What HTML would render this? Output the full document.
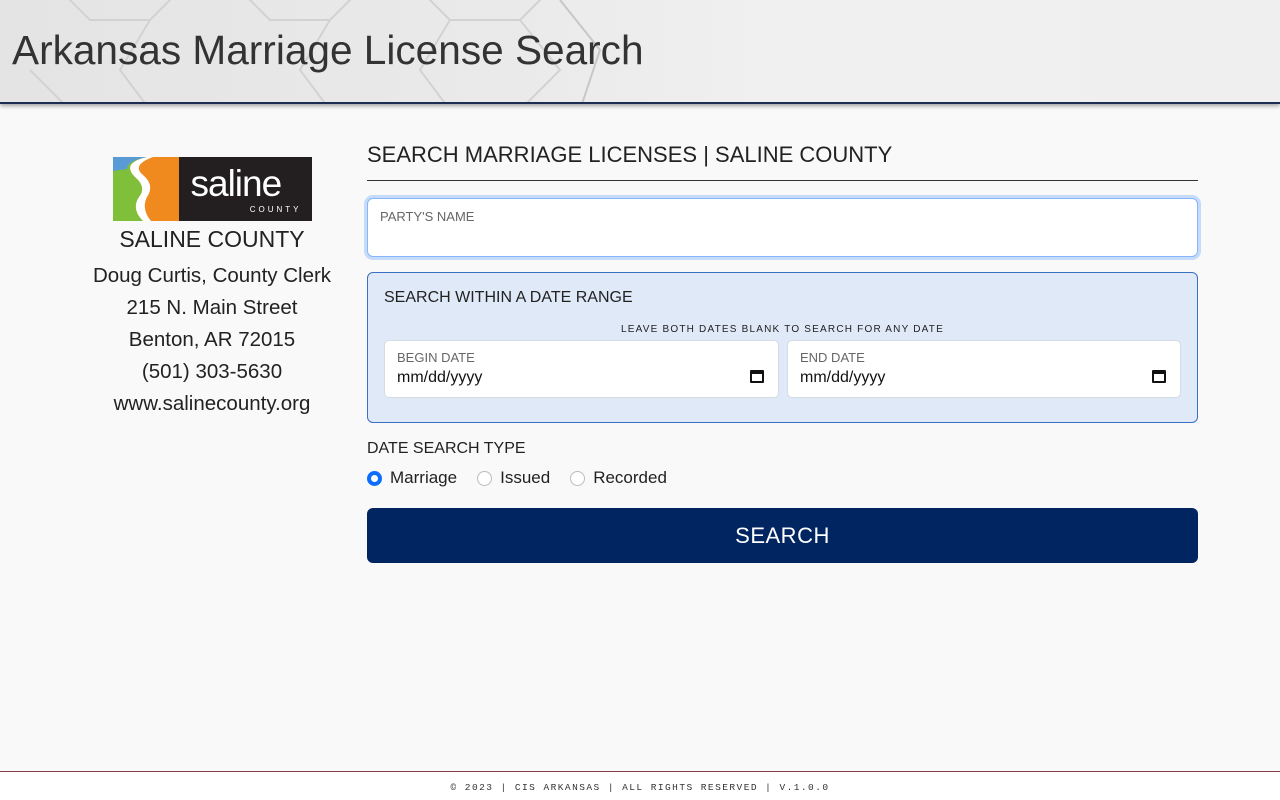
<!DOCTYPE html>
<html><head><meta charset="utf-8"><style>
*{box-sizing:border-box;margin:0;padding:0}
body{width:1280px;height:800px;background:#f9f9f9;font-family:"Liberation Sans",sans-serif;color:#222;position:relative;overflow:hidden}
.hdr{position:absolute;left:0;top:0;width:1280px;height:104px;background:linear-gradient(90deg,#e4e4e4 0%,#eaeaea 40%,#f0f0f0 60%,#efefef 100%);border-bottom:2px solid #1d2c52;box-shadow:0 2px 4px rgba(0,0,0,.35);overflow:hidden}
.hdr h1{position:absolute;left:12px;top:27px;font-weight:normal;font-size:40.6px;color:#333}
.left{position:absolute;left:82px;width:260px;top:157px;text-align:center}
.logo{width:199px;height:64px;margin:0 auto;display:flex}
.logo .l{width:66px;height:64px;position:relative;overflow:hidden}
.logo .r{flex:1;background:#231f20;color:#fff;position:relative}
.left .cn{font-size:23px;margin-top:5px;color:#222}
.left p{font-size:20.5px;line-height:32px;color:#222}
.main{position:absolute;left:367px;width:831px;top:142px}
.main h2{font-weight:normal;font-size:22px;color:#222;padding-bottom:12px;border-bottom:1px solid #333}
.pn{margin-top:17px;height:59px;background:#fff;border:1px solid #86b7fe;box-shadow:0 0 0 3px #c6dbfa;border-radius:6px;padding:10px 12px;font-size:13px;color:#666}
.dr{margin-top:15px;height:151px;background:#dfe9f8;border:1px solid #3a6fc4;border-radius:6px;position:relative}
.dr .t{position:absolute;left:16px;top:16px;font-size:16px;color:#222}
.dr .hint{position:absolute;left:0;right:0;top:51px;text-align:center;font-size:10px;letter-spacing:1.2px;color:#222}
.di{position:absolute;top:67px;width:395px;height:58px;background:#fff;border:1px solid #d5dbe3;border-radius:5px;padding:9px 12px}
.di .lb{font-size:13px;color:#666}
.di .v{font-size:16px;color:#111;margin-top:4px}
.cal{position:absolute;right:14px;top:29px;width:14px;height:13px;border:2px solid #111;border-top-width:4px;border-radius:1px}
.dst{margin-top:17px;font-size:16px}
.radios{margin-top:10px;font-size:17px;display:flex;align-items:center}
.rd{width:15px;height:15px;border-radius:50%;border:1px solid #bbb;background:#fff;display:inline-block;margin-right:8px}
.rd.on{border:4px solid #0d6efd}
.radios span.l{margin-right:20px}
.btn{margin-top:20px;height:55px;background:#002561;border-radius:6px;color:#fff;font-size:22px;text-align:center;line-height:55px;letter-spacing:.5px}
.ft{position:absolute;left:0;top:771px;width:1280px;height:29px;background:#fff;border-top:1px solid #8a3b48;text-align:center;font-family:"Liberation Mono",monospace;font-size:9.5px;letter-spacing:1.45px;color:#333;padding-top:10px}
</style></head><body>
<div class="hdr">
<svg width="700" height="104" style="position:absolute;left:0;top:0" fill="none" stroke="#d2d2d2" stroke-width="2">
<path d="M60 -10 L90 20 L150 20 L180 -10"/><path d="M240 -10 L270 20 L330 20 L360 -10"/>
<path d="M150 20 L120 70 L150 110"/><path d="M330 20 L300 70 L330 110"/>
<path d="M420 -10 L450 20 L520 20 L550 -10"/><path d="M520 20 L560 70 L520 110"/>
<path d="M450 20 L420 70 L450 110"/><path d="M560 0 L600 50 L580 110" stroke="#c8c8c8"/>
<path d="M30 70 L70 110"/>
</svg>
<h1>Arkansas Marriage License Search</h1>
</div>
<div class="left">
<div class="logo"><div class="l">
<svg width="66" height="64" viewBox="0 0 66 64"><rect width="66" height="64" fill="#f08a1e"/><path d="M0 0 L34 0 Q8 6 22 20 Q34 30 26 40 Q18 52 30 64 L0 64Z" fill="#7fbf3a"/><path d="M0 0 L34 0 Q14 4 14 12 L0 14Z" fill="#5b9bd5"/><path d="M34 0 Q8 6 22 20 Q34 30 26 40 Q18 52 30 64 L38 64 Q28 52 34 40 Q42 28 30 18 Q18 8 40 0Z" fill="#fff"/></svg>
</div><div class="r"><span style="position:absolute;left:12px;top:6px;font-size:37px;letter-spacing:-1px">saline</span><span style="position:absolute;right:10px;top:48px;font-size:8px;letter-spacing:3px">COUNTY</span></div></div>
<div class="cn">SALINE COUNTY</div>
<p style="margin-top:7px">Doug Curtis, County Clerk</p>
<p>215 N. Main Street</p>
<p>Benton, AR 72015</p>
<p>(501) 303-5630</p>
<p>www.salinecounty.org</p>
</div>
<div class="main">
<h2>SEARCH MARRIAGE LICENSES | SALINE COUNTY</h2>
<div class="pn">PARTY'S NAME</div>
<div class="dr">
<div class="t">SEARCH WITHIN A DATE RANGE</div>
<div class="hint">LEAVE BOTH DATES BLANK TO SEARCH FOR ANY DATE</div>
<div class="di" style="left:16px"><div class="lb">BEGIN DATE</div><div class="v">mm/dd/yyyy</div><div class="cal"></div></div>
<div class="di" style="left:419px;width:394px"><div class="lb">END DATE</div><div class="v">mm/dd/yyyy</div><div class="cal"></div></div>
</div>
<div class="dst">DATE SEARCH TYPE</div>
<div class="radios"><span class="rd on"></span><span class="l">Marriage</span><span class="rd"></span><span class="l">Issued</span><span class="rd"></span><span class="l">Recorded</span></div>
<div class="btn">SEARCH</div>
</div>
<div class="ft">© 2023 | CIS ARKANSAS | ALL RIGHTS RESERVED | V.1.0.0</div>
</body></html>
